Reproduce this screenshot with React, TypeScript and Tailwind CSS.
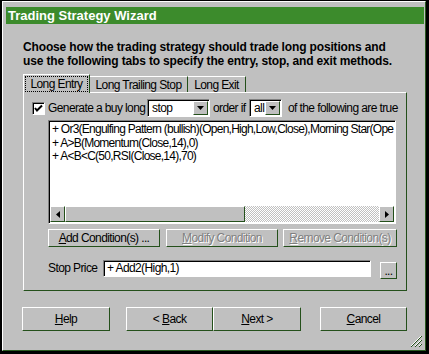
const raised =
  "border border-t-white border-l-white border-r-[#24501b] border-b-[#24501b] bg-[#c0c0c0]";
const sunken =
  "border border-t-[#808080] border-l-[#808080] border-r-white border-b-white shadow-[inset_1px_1px_0_#000]";

function DownArrow() {
  return (
    <svg width="7" height="4" viewBox="0 0 7 4">
      <polygon points="0,0 7,0 3.5,4" fill="#000" />
    </svg>
  );
}

function Dropdown({ value, width }: { value: string; width: string }) {
  return (
    <div className={`${sunken} ${width} h-[18px] bg-white flex items-stretch p-px`}>
      <div className="flex-1 pl-[3px] leading-[15px] truncate">{value}</div>
      <div className={`${raised} w-[15px] flex items-center justify-center`}>
        <DownArrow />
      </div>
    </div>
  );
}

function Button({
  children,
  width,
  height = "h-[18px]",
  disabled = false,
}: {
  children: React.ReactNode;
  width: string;
  height?: string;
  disabled?: boolean;
}) {
  return (
    <div
      className={`${raised} ${width} ${height} flex items-center justify-center whitespace-nowrap ${
        disabled ? "text-[#808080] [text-shadow:1px_1px_0_#fff]" : ""
      }`}
    >
      {children}
    </div>
  );
}

// first line is cut by the list box in the original, keep the visible part
const conditions = [
  "+ Or3(Engulfing Pattern (bullish)(Open,High,Low,Close),Morning Star(Ope",
  "+ A>B(Momentum(Close,14),0)",
  "+ A<B<C(50,RSI(Close,14),70)",
];

export default function App() {
  return (
    <div className="w-[429px] h-[354px] bg-black pl-[2px] pt-px pr-[3px] pb-[3px] font-['Liberation_Sans',Arial,sans-serif] text-[12px] tracking-[-0.6px] text-black">
      <div className="h-full bg-[#c0c0c0] border border-t-white border-l-white border-r-[#2a5a20] border-b-[#2a5a20] flex flex-col">
        {/* title bar */}
        <div className="mt-[5px] ml-[3px] mr-px h-[17px] bg-[#3c8b2c] pl-[2px] text-white font-bold text-[13px] tracking-normal leading-[17px]">
          Trading Strategy Wizard
        </div>

        <div className="mt-[16px] ml-[20px] font-bold tracking-[-0.15px] leading-[14px]">
          <div>Choose how the trading strategy should trade long positions and</div>
          <div>use the following tabs to specify the entry, stop, and exit methods.</div>
        </div>

        {/* tabs */}
        <div className="mt-[6px] ml-[20px] h-[19px] flex items-end relative z-10">
          <div className="w-[67px] h-[19px] bg-[#c0c0c0] border-t border-l border-r border-t-white border-l-white border-r-[#24501b] pt-px px-px">
            <div className="h-[16px] border border-dotted border-black flex items-center justify-center">
              Long Entry
            </div>
          </div>
          <div className="w-[98px] h-[16px] mb-px border-t border-r border-t-white border-r-[#24501b] flex items-center justify-center">
            Long Trailing Stop
          </div>
          <div className="w-[58px] h-[16px] mb-px border-t border-r border-t-white border-r-[#24501b] flex items-center justify-center">
            Long Exit
          </div>
        </div>

        {/* panel */}
        <div className="-mt-px ml-[20px] w-[384px] h-[199px] border border-t-white border-l-white border-r-[#24501b] border-b-[#24501b] flex flex-col">
          <div className="mt-[6px] ml-[8px] h-[18px] flex items-center whitespace-nowrap">
            <div className={`${sunken} w-[13px] h-[13px] bg-white flex items-center justify-center`}>
              <svg width="9" height="9" viewBox="0 0 9 9">
                <polyline points="1,4 3,6.5 8,1.5" fill="none" stroke="#000" strokeWidth="2" />
              </svg>
            </div>
            <span className="ml-[3px] w-[99px]">Generate a buy long</span>
            <Dropdown value="stop" width="w-[63px]" />
            <span className="ml-[3px] w-[36px]">order if</span>
            <Dropdown value="all" width="w-[33px]" />
            <span className="ml-[6px]">of the following are true</span>
          </div>

          {/* conditions list */}
          <div className={`${sunken} mt-[3px] ml-[24px] w-[348px] h-[104px] bg-white flex flex-col p-px`}>
            <div className="flex-1 overflow-hidden pl-[2px] pt-px leading-[13.5px] whitespace-nowrap tracking-[-0.75px]">
              {conditions.map((c) => (
                <div key={c}>{c}</div>
              ))}
            </div>
            <div className="h-[16px] flex">
              <div className={`${raised} w-[15px] flex items-center justify-center`}>
                <svg width="4" height="7" viewBox="0 0 4 7">
                  <polygon points="4,0 4,7 0,3.5" fill="#000" />
                </svg>
              </div>
              <div className={`${raised} w-[180px]`} />
              <div className="flex-1 bg-[image:repeating-conic-gradient(#fff_0_25%,#c0c0c0_0_50%)] bg-[length:2px_2px]" />
              <div className={`${raised} w-[15px] flex items-center justify-center`}>
                <svg width="4" height="7" viewBox="0 0 4 7">
                  <polygon points="0,0 0,7 4,3.5" fill="#000" />
                </svg>
              </div>
            </div>
          </div>

          <div className="mt-[5px] ml-[24px] flex">
            <Button width="w-[112px]">
              <span className="underline">A</span>dd Condition(s) ...
            </Button>
            <div className="ml-[6px]">
              <Button width="w-[112px]" disabled>
                <span className="underline">M</span>odify Condition
              </Button>
            </div>
            <div className="ml-[5px]">
              <Button width="w-[114px]" disabled>
                <span className="underline">R</span>emove Condition(s)
              </Button>
            </div>
          </div>

          <div className="mt-[13px] ml-[24px] flex items-start">
            <span className="w-[55px] h-[17px] leading-[17px]">Stop Price</span>
            <div className={`${sunken} w-[268px] h-[17px] bg-white pl-[3px] leading-[15px]`}>
              + Add2(High,1)
            </div>
            <div className="ml-[9px] mt-[2px]">
              <Button width="w-[17px]" height="h-[17px]">
                ...
              </Button>
            </div>
          </div>
        </div>

        {/* wizard buttons */}
        <div className="mt-[16px] ml-[19px] flex">
          <Button width="w-[88px]" height="h-[24px]">
            <span className="underline">H</span>elp
          </Button>
          <div className="ml-[16px] flex">
            <Button width="w-[87px]" height="h-[24px]">
              &lt; <span className="underline ml-[3px]">B</span>ack
            </Button>
            <Button width="w-[88px]" height="h-[24px]">
              <span className="underline">N</span>ext &gt;
            </Button>
          </div>
          <div className="ml-[19px]">
            <Button width="w-[87px]" height="h-[24px]">
              <span className="underline">C</span>ancel
            </Button>
          </div>
        </div>

        <div className="mt-[4px] mr-[3px] flex justify-end">
          <svg width="12" height="12" viewBox="0 0 12 12">
            <path d="M11 1 L1 11 M11 5 L5 11 M11 9 L9 11" stroke="#fff" strokeWidth="1" />
            <path d="M12 1 L1 12 M12 5 L5 12 M12 9 L9 12" stroke="#24501b" strokeWidth="1" />
          </svg>
        </div>
      </div>
    </div>
  );
}
